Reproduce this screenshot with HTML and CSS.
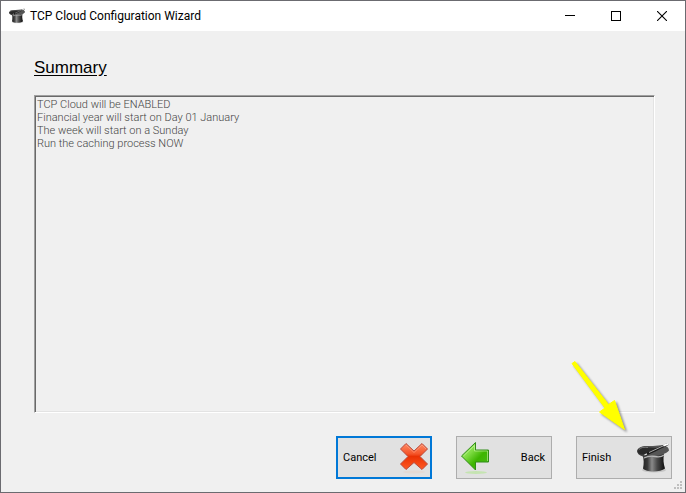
FILE: index.html
```html
<!DOCTYPE html>
<html lang="en">

<head>
    <meta charset="UTF-8">
    <meta name="viewport" content="width=device-width, initial-scale=1.0">
    <title>TCP Cloud Configuration Wizard</title>
    <link rel="stylesheet" href="styles.css">
</head>

<body>
    <!-- Shared top hat artwork -->
    <svg class="defs" aria-hidden="true">
        <defs>
            <linearGradient id="hat-body" x1="0" x2="1" y1="0" y2="0">
                <stop offset="0" stop-color="#222"/>
                <stop offset=".22" stop-color="#3a3a3a"/>
                <stop offset=".42" stop-color="#8a8a8a"/>
                <stop offset=".65" stop-color="#4a4a4a"/>
                <stop offset="1" stop-color="#0c0c0c"/>
            </linearGradient>
            <linearGradient id="hat-brim" x1="0" x2="1" y1="0" y2="0">
                <stop offset="0" stop-color="#333"/>
                <stop offset=".4" stop-color="#555"/>
                <stop offset="1" stop-color="#555"/>
            </linearGradient>
            <symbol id="hat" viewBox="0 0 32 30">
                <ellipse cx="17" cy="27" rx="12" ry="2.500" fill="#000" opacity=".12"/>
                <path d="M5.500 12C7 16 7 21 6 25.500C9 29.500 23.500 29.500 28 25.500C26.500 21 26 16 27 11Z" fill="url(#hat-body)"/>
                <path d="M0 8C1 4 6 2.500 11 3C17 3.500 22 1.500 27 2.500C30 3 32 5 32 7.500C29 11 24 12.500 18 12.500C14 12.500 10 14.500 6 13.500C2 12.500 0 10 0 8Z" fill="url(#hat-brim)"/>
                <path d="M1 9C2 5 8 4 13 4.500L23 5C20 9 13 10 9 11C5 12 2 11 1 9Z" fill="#2a2a2a"/>
                <path d="M2 6.500C4 4 7 4 11 4.500" fill="none" stroke="#777"/>
                <path d="M7 15Q12 12.500 18 13.500T27 12" fill="none" stroke="#b5b5b5" stroke-width="1.300"/>
                <path d="M8 12L31 1" stroke="#1c1c1c" stroke-width="2.400"/>
                <path d="M12 9.500L27 2.500" stroke="#aaa" stroke-width="1"/>
                <path d="M26.500 2.700L31 .8" stroke="#fff" stroke-width="2"/>
                <path d="M7.500 12L10 10.800" stroke="#ddd" stroke-width="1.300"/>
            </symbol>
        </defs>
    </svg>

    <div class="window">
        <header class="titlebar">
            <svg class="app-icon" aria-hidden="true"><use href="#hat"/></svg>
            <span class="title">TCP Cloud Configuration Wizard</span>
            <button class="caption-btn" type="button" aria-label="Minimize">
                <svg width="10" height="10" shape-rendering="crispEdges"><path d="M0 4.500H10" stroke="#000"/></svg>
            </button>
            <button class="caption-btn" type="button" aria-label="Maximize">
                <svg width="10" height="10" shape-rendering="crispEdges"><rect x=".5" y=".5" width="9" height="9" fill="none" stroke="#000"/></svg>
            </button>
            <button class="caption-btn" type="button" aria-label="Close">
                <svg width="10" height="10"><path d="M0 0L10 10M10 0L0 10" stroke="#000" stroke-width="1.100"/></svg>
            </button>
        </header>

        <main class="page">
            <label class="heading" for="summary">Summary</label>
            <textarea class="summary" id="summary" disabled>TCP Cloud will be ENABLED
Financial year will start on Day 01 January
The week will start on a Sunday
Run the caching process NOW</textarea>
        </main>

        <footer class="actions">
            <button class="btn btn-default" type="button">
                <span>Cancel</span>
                <svg class="btn-icon" viewBox="0 0 32 32" aria-hidden="true">
                    <defs>
                        <linearGradient id="red" x1="0" x2="0" y1="0" y2="1">
                            <stop offset="0" stop-color="#ff8a64"/>
                            <stop offset=".4" stop-color="#f4552a"/>
                            <stop offset=".5" stop-color="#ea3204"/>
                            <stop offset="1" stop-color="#ff5a24"/>
                        </linearGradient>
                    </defs>
                    <ellipse cx="16" cy="30" rx="11" ry="1.500" fill="#f96" opacity=".1"/>
                    <path d="M8 1.500L16 9L24 1.500L29.500 7L22 14.500L29.500 22L24 27.500L16 20.500L8 27.500L2.500 22L10 14.500L2.500 7Z" fill="url(#red)" stroke="#b94a3c" stroke-linejoin="round"/>
                    <path d="M8 3L16 10.500L24 3L28 7" fill="none" stroke="#ffb39a" opacity=".5"/>
                </svg>
            </button>
            <button class="btn btn-back" type="button">
                <svg class="btn-icon" viewBox="0 0 32 32" aria-hidden="true">
                    <defs>
                        <linearGradient id="green" x1="0" x2="1" y1="0" y2="1">
                            <stop offset="0" stop-color="#b5ef8c"/>
                            <stop offset=".35" stop-color="#7fdc43"/>
                            <stop offset=".6" stop-color="#3db500"/>
                            <stop offset="1" stop-color="#4bbd1d"/>
                        </linearGradient>
                    </defs>
                    <ellipse cx="16" cy="30.500" rx="11" ry="1.500" fill="#9be86a" opacity=".4"/>
                    <path d="M1.500 14L15.500 .5V8H28.500V20H15.500V28Z" fill="url(#green)" stroke="#318c18" stroke-linejoin="round"/>
                    <path d="M3.500 14L14.500 3.500V9H27.500V19" fill="none" stroke="#c9f5a8" opacity=".6"/>
                </svg>
                <span>Back</span>
            </button>
            <button class="btn" type="button">
                <span>Finish</span>
                <svg class="btn-icon btn-hat" aria-hidden="true"><use href="#hat"/></svg>
            </button>

            <!-- Callout arrow over the Finish button -->
            <svg class="pointer" viewBox="0 0 60 76" aria-hidden="true">
                <path d="M4 7.500L7 5.500L40.500 48.500L46.500 44.500L56.500 73.500L31.500 56L37 52Z" fill="#ff0" stroke="#ff0" stroke-width="1"/>
            </svg>
        </footer>

        <svg class="grip" width="9" height="9" fill="#bfbfbf" shape-rendering="crispEdges" aria-hidden="true">
            <path d="M6 0h2v2h-2zM3 3h2v2h-2zM6 3h2v2h-2zM0 6h2v2h-2zM3 6h2v2h-2zM6 6h2v2h-2z"/>
        </svg>
    </div>
</body>

</html>
```
FILE: styles.css
```css
* {
    box-sizing: border-box;
}

body {
    margin: 0;
    font-family: Roboto, "Liberation Sans", Arial, sans-serif;
    font-size: 11px;
    color: #000;
}

.defs {
    position: absolute;
    width: 0;
    height: 0;
}

.window {
    position: relative;
    display: flex;
    flex-direction: column;
    min-height: 100vh;
    background: #f0f0f0;
    border: 1px solid #6b6b70;
}

/* Title bar */
.titlebar {
    display: flex;
    align-items: center;
    height: 30px;
    padding-left: 8px;
    background: #fff;
}

.app-icon {
    width: 16px;
    height: 16px;
    margin-right: 5px;
}

.title {
    flex: 1;
    font-size: 12px;
}

.caption-btn {
    display: flex;
    align-items: center;
    justify-content: center;
    width: 46px;
    height: 30px;
    padding: 0;
    background: none;
    border: 0;
}

/* Page content */
.page {
    display: flex;
    flex: 1;
    flex-direction: column;
    padding: 27px 30px 0 33px;
}

.heading {
    align-self: flex-start;
    margin-bottom: 17px;
    font-family: "Liberation Sans", Arial, sans-serif;
    font-size: 17px;
    line-height: 20px;
    text-decoration: underline;
    text-underline-offset: 2px;
}

.summary {
    flex: 1;
    width: 100%;
    padding: 2px;
    font: inherit;
    font-weight: 300;
    line-height: 13px;
    color: #444;
    background: #f0f0f0;
    border: 1px solid;
    border-color: #a0a0a0 #fff #fff #a0a0a0;
    border-radius: 0;
    box-shadow: inset 1px 1px #696969, inset -1px -1px #e3e3e3;
    resize: none;
}

/* Buttons */
.actions {
    position: relative;
    display: flex;
    justify-content: flex-end;
    gap: 24px;
    padding: 23px 13px 13px;
}

.btn {
    display: flex;
    align-items: center;
    justify-content: space-between;
    width: 96px;
    height: 43px;
    padding: 0 2px 0 5px;
    font: inherit;
    color: #000;
    background: #e1e1e1;
    border: 1px solid #adadad;
}

.btn-default {
    padding: 0 0 0 5px;
    border: 2px solid #0078d7;
}

.btn-back {
    padding: 0 6px 0 3px;
}

.btn-icon {
    width: 32px;
    height: 32px;
}

.btn-hat {
    height: 30px;
}

.pointer {
    position: absolute;
    right: 57px;
    bottom: 60px;
    width: 60px;
    height: 76px;
    filter: drop-shadow(2px 2px 1px rgba(0, 0, 0, 0.4));
    pointer-events: none;
}

.grip {
    position: absolute;
    right: 2px;
    bottom: 2px;
}
```
